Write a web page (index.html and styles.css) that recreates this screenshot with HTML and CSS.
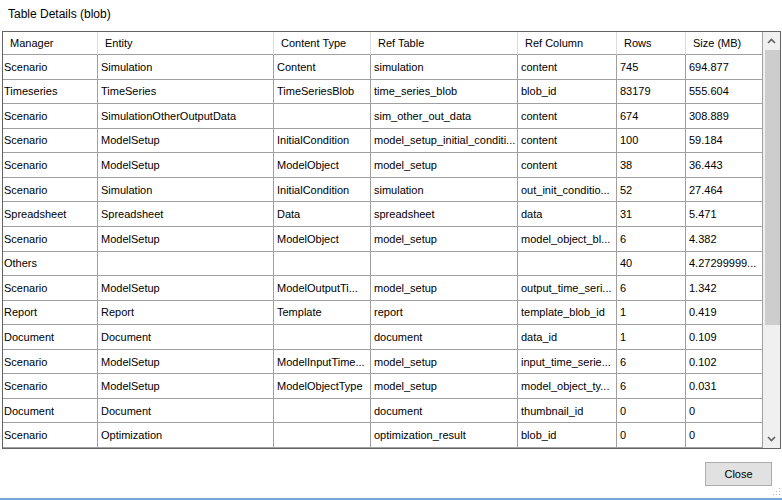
FILE: index.html
```html
<!DOCTYPE html>
<html>
	<head>
		<meta charset="UTF-8">
		<title>Table Details (blob)</title>
		<link rel="stylesheet" href="styles.css">
	</head>
	<body>
		<div class="title">Table Details (blob)</div>
		<div class="grid">
			<div class="rows">
				<div class="row head">
					<span>Manager</span><span>Entity</span><span>Content Type</span><span>Ref Table</span><span>Ref Column</span><span>Rows</span><span>Size (MB)</span>
				</div>
				<div class="row"><span>Scenario</span><span>Simulation</span><span>Content</span><span>simulation</span><span>content</span><span>745</span><span>694.877</span></div>
				<div class="row"><span>Timeseries</span><span>TimeSeries</span><span>TimeSeriesBlob</span><span>time_series_blob</span><span>blob_id</span><span>83179</span><span>555.604</span></div>
				<div class="row"><span>Scenario</span><span>SimulationOtherOutputData</span><span></span><span>sim_other_out_data</span><span>content</span><span>674</span><span>308.889</span></div>
				<div class="row"><span>Scenario</span><span>ModelSetup</span><span>InitialCondition</span><span>model_setup_initial_conditi...</span><span>content</span><span>100</span><span>59.184</span></div>
				<div class="row"><span>Scenario</span><span>ModelSetup</span><span>ModelObject</span><span>model_setup</span><span>content</span><span>38</span><span>36.443</span></div>
				<div class="row"><span>Scenario</span><span>Simulation</span><span>InitialCondition</span><span>simulation</span><span>out_init_conditio...</span><span>52</span><span>27.464</span></div>
				<div class="row"><span>Spreadsheet</span><span>Spreadsheet</span><span>Data</span><span>spreadsheet</span><span>data</span><span>31</span><span>5.471</span></div>
				<div class="row"><span>Scenario</span><span>ModelSetup</span><span>ModelObject</span><span>model_setup</span><span>model_object_bl...</span><span>6</span><span>4.382</span></div>
				<div class="row"><span>Others</span><span></span><span></span><span></span><span></span><span>40</span><span>4.27299999...</span></div>
				<div class="row"><span>Scenario</span><span>ModelSetup</span><span>ModelOutputTi...</span><span>model_setup</span><span>output_time_seri...</span><span>6</span><span>1.342</span></div>
				<div class="row"><span>Report</span><span>Report</span><span>Template</span><span>report</span><span>template_blob_id</span><span>1</span><span>0.419</span></div>
				<div class="row"><span>Document</span><span>Document</span><span></span><span>document</span><span>data_id</span><span>1</span><span>0.109</span></div>
				<div class="row"><span>Scenario</span><span>ModelSetup</span><span>ModelInputTime...</span><span>model_setup</span><span>input_time_serie...</span><span>6</span><span>0.102</span></div>
				<div class="row"><span>Scenario</span><span>ModelSetup</span><span>ModelObjectType</span><span>model_setup</span><span>model_object_ty...</span><span>6</span><span>0.031</span></div>
				<div class="row"><span>Document</span><span>Document</span><span></span><span>document</span><span>thumbnail_id</span><span>0</span><span>0</span></div>
				<div class="row"><span>Scenario</span><span>Optimization</span><span></span><span>optimization_result</span><span>blob_id</span><span>0</span><span>0</span></div>
			</div>
			<div class="vscroll">
				<div class="arrow">
					<svg width="9" height="6" viewBox="0 0 9 6"><polyline points="1,5 4.5,1.5 8,5" fill="none" stroke="#606060" stroke-width="1.6"/></svg>
				</div>
				<div class="track"><div class="thumb"></div></div>
				<div class="arrow">
					<svg width="9" height="6" viewBox="0 0 9 6"><polyline points="1,1 4.5,4.5 8,1" fill="none" stroke="#606060" stroke-width="1.6"/></svg>
				</div>
			</div>
		</div>
		<div class="footer">
			<button class="btn">Close</button>
			<svg class="grip" width="8" height="8" viewBox="0 0 8 8">
				<rect x="6" y="0" width="1" height="1" fill="#b4b4b4"/>
				<rect x="3" y="3" width="1" height="1" fill="#b4b4b4"/>
				<rect x="6" y="3" width="1" height="1" fill="#b4b4b4"/>
				<rect x="0" y="6" width="1" height="1" fill="#b4b4b4"/>
				<rect x="3" y="6" width="1" height="1" fill="#b4b4b4"/>
				<rect x="6" y="6" width="1" height="1" fill="#b4b4b4"/>
			</svg>
		</div>
		<div class="edge"></div>
	</body>
</html>
```

FILE: styles.css
```css
/* 对话框 782*500 */

body{
	margin: 0;
	background: white;
	font-family: "Liberation Sans", Arial, sans-serif;
	font-size: 11px;
	color: black;
}
.title{
	height: 31px;
	box-sizing: border-box;
	padding: 6px 0 0 8px;
	font-size: 12px;
	line-height: 16px;
}
.grid{
	display: flex;
	margin-left: 2px;
	width: 779px;
	height: 418px;
	box-sizing: border-box;
	border: 1px solid #646464;
	overflow: hidden;
}
.rows{
	width: 760px;
}
.row{
	display: grid;
	grid-template-columns: 95px 176px 97px 147px 99px 69px 77px;
	height: 24.5625px;
}
.row span{
	box-sizing: border-box;
	border-right: 1px solid #a0a0a0;
	border-bottom: 1px solid #a0a0a0;
	padding-left: 3px;
	white-space: nowrap;
	overflow: hidden;
	display: flex;
	align-items: center;
}
.row span:first-child{
	padding-left: 1px;
}
.row.head{
	height: 23px;
}
.row.head span{
	border-right-color: #dcdcdc;
	padding-left: 7px;
}
.row.head span:last-child{
	border-right-color: #a0a0a0;
}
.vscroll{
	width: 17px;
	background: #f0f0f0;
	display: flex;
	flex-direction: column;
}
.arrow{
	height: 18px;
	display: flex;
	align-items: center;
	justify-content: center;
}
.track{
	flex: 1;
	padding-left: 2px;
}
.thumb{
	height: 275px;
	background: #cdcdcd;
}
.footer{
	position: relative;
	height: 49px;
	display: flex;
	justify-content: flex-end;
	align-items: flex-start;
}
.btn{
	margin: 13px 10px 0 0;
	width: 67px;
	height: 24px;
	background: #e1e1e1;
	border: 1px solid #adadad;
	font: 11px "Liberation Sans", Arial, sans-serif;
	color: black;
	padding: 0;
}
.grip{
	position: absolute;
	right: 1px;
	bottom: 2px;
}
.edge{
	height: 2px;
	background: #7aa7dc;
}
```
